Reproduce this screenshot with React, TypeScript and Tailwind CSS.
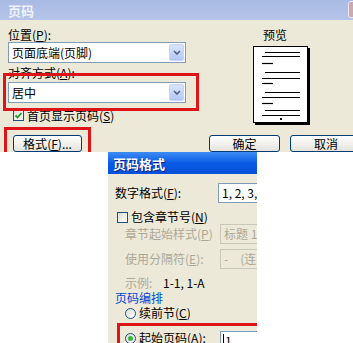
import React from 'react';

const font = { fontFamily: '"Noto Sans CJK SC", "Noto Sans", sans-serif' };

const Key = ({ k }: { k: string }) => (
  <span>
    (<span className="underline">{k}</span>)
  </span>
);

const DropArrow = () => (
  <div className="w-[15px] h-[17px] mr-[1px] rounded-[2px] bg-gradient-to-b from-[#d8e4fd] to-[#b4c8f4] border border-[#c3d3fd] flex items-center justify-center">
    <svg width="8" height="5" viewBox="0 0 8 5">
      <path d="M1 1 L4 4 L7 1" stroke="#4d6185" strokeWidth="1.6" fill="none" />
    </svg>
  </div>
);

const Select = ({ text }: { text: string }) => (
  <div className="h-[21px] bg-white border border-[#7f9db9] flex items-center justify-between">
    <span className="pl-[3px] text-[12px] leading-[14px] text-black">{text}</span>
    <DropArrow />
  </div>
);

const Checkbox = ({ checked }: { checked?: boolean }) => (
  <div className="w-[11px] h-[11px] border border-[#1c5180] bg-gradient-to-br from-[#dcdcd7] to-white flex items-center justify-center shrink-0">
    {checked && (
      <svg width="9" height="9" viewBox="0 0 9 9">
        <path d="M1.5 4.5 L3.5 6.5 L7.5 2" stroke="#21a121" strokeWidth="1.8" fill="none" />
      </svg>
    )}
  </div>
);

const Radio = ({ checked }: { checked?: boolean }) => (
  <div className="w-[11px] h-[11px] rounded-full border border-[#1c5180] bg-gradient-to-br from-[#dcdcd7] to-white flex items-center justify-center shrink-0">
    {checked && <div className="w-[5px] h-[5px] rounded-full bg-[#3cb33c]" />}
  </div>
);

const XpButton = ({ children, className }: { children: React.ReactNode; className: string }) => (
  <div
    className={`h-[17px] rounded-[3px] border border-[#003c74] bg-gradient-to-b from-white to-[#e4e3dc] flex items-center justify-center text-[12px] leading-[14px] text-black shrink-0 ${className}`}
  >
    {children}
  </div>
);

const lines = [
  [6, 12, 47], [10, 9, 47], [17, 9, 20],
  [26, 12, 47], [32, 9, 47], [37, 9, 20],
  [46, 12, 47], [51, 9, 47], [57, 9, 20],
  [64, 12, 47], [69, 9, 47],
];

const Preview = () => (
  <svg width="57" height="79" viewBox="0 0 57 79">
    <rect x="2" y="2" width="55" height="77" fill="#000" />
    <rect x="0.5" y="0.5" width="54" height="76" fill="#fff" stroke="#000" />
    {lines.map(([y, x1, x2], i) => (
      <line key={i} x1={x1} x2={x2} y1={y + 0.5} y2={y + 0.5} stroke="#000" strokeWidth="1.2" />
    ))}
    <rect x="27" y="72" width="2" height="2" fill="#000" />
  </svg>
);

export default function App() {
  return (
    <div className="w-[353px] h-[343px] overflow-hidden bg-white" style={font}>
      {/* 页码 dialog */}
      <div className="h-[152px] bg-[#ece9d8] flex flex-col relative overflow-hidden">
        <div className="h-[20px] shrink-0 bg-gradient-to-b from-[#a9bbe3] to-[#b4c4e8] flex items-center pl-[8px] relative">
          <span className="text-[13px] leading-[15px] font-bold text-[#eef2fb]">页码</span>
          <div className="absolute right-[-7px] top-[1px] w-[12px] h-[17px] rounded-[3px] bg-[#c9a9b3] border border-[#efe6ee]" />
        </div>

        <div className="flex">
          <div className="w-[178px] ml-[8px] flex flex-col">
            <div className="pt-[7px] h-[22px] text-[12px] leading-[15px] text-black">
              位置<Key k="P" />:
            </div>
            <Select text="页面底端(页脚)" />
            <div className="h-[19px] text-[12px] leading-[19px] text-black">
              对齐方式<Key k="A" />:
            </div>
            <Select text="居中" />
            <div className="mt-[5px] h-[15px] flex items-center gap-[3px] pl-[5px] text-[12px] leading-[14px] text-black">
              <Checkbox checked />
              <span>首页显示页码<Key k="S" /></span>
            </div>
          </div>

          <div className="ml-[67px] w-[58px] flex flex-col">
            <div className="pt-[8px] h-[22px] pl-[10px] text-[12px] leading-[14px] text-black">预览</div>
            <div className="mt-[4px]">
              <Preview />
            </div>
          </div>
        </div>

        <div className="mt-[10px] flex items-start">
          <XpButton className="ml-[13px] w-[69px]">
            格式<Key k="F" />...
          </XpButton>
          <XpButton className="ml-[127px] w-[71px]">确定</XpButton>
          <XpButton className="ml-[10px] w-[72px]">取消</XpButton>
        </div>

        {/* annotation boxes */}
        <div className="absolute left-[3px] top-[73px] w-[196px] h-[38px] border-[3px] border-[#dd1418]" />
        <div className="absolute left-[4px] top-[127px] w-[87px] h-[40px] border-[3px] border-[#dd1418]" />
      </div>

      {/* 页码格式 dialog */}
      <div className="flex h-[191px]">
        <div className="w-[108px] shrink-0 bg-white" />
        <div className="w-[149px] shrink-0 bg-[#ece9d8] flex flex-col relative overflow-hidden">
          <div className="h-[22px] shrink-0 bg-gradient-to-b from-[#3c8cf6] via-[#0a5be6] to-[#0450d8] flex items-center pl-[5px]">
            <span className="text-[13px] leading-[15px] font-bold text-white [text-shadow:1px_1px_0_#0a1e8a]">页码格式</span>
          </div>

          <div className="mt-[9px] h-[20px] flex items-center text-[12px] leading-[14px] text-black">
            <span className="pl-[7px] w-[110px] shrink-0">
              数字格式<Key k="F" />:
            </span>
            <div className="h-[20px] w-[80px] shrink-0 bg-white border border-[#7f9db9] flex items-center pl-[3px] whitespace-nowrap">
              1,&nbsp;2,&nbsp;3,&nbsp;…
            </div>
          </div>

          <div className="mt-[7px] h-[14px] flex items-center gap-[3px] pl-[9px] text-[12px] leading-[14px] text-black">
            <Checkbox />
            <span>包含章节号<Key k="N" /></span>
          </div>

          <div className="h-[20px] flex items-center text-[12px] leading-[14px] text-[#aca899] whitespace-nowrap">
            <span className="pl-[17px] w-[112px] shrink-0">
              章节起始样式<Key k="P" />
            </span>
            <div className="h-[20px] w-[80px] shrink-0 border border-[#c9c7ba] flex items-center pl-[3px]">标题 1</div>
          </div>

          <div className="mt-[5px] h-[20px] flex items-center text-[12px] leading-[14px] text-[#aca899] whitespace-nowrap">
            <span className="pl-[17px] w-[112px] shrink-0">
              使用分隔符<Key k="E" />:
            </span>
            <div className="h-[20px] w-[80px] shrink-0 border border-[#c9c7ba] flex items-center pl-[3px]">-　(连字符)</div>
          </div>

          <div className="mt-[7px] h-[14px] flex items-center pl-[17px] text-[12px] leading-[14px] whitespace-nowrap">
            <span className="text-[#aca899] w-[38px]">示例:</span>
            <span className="text-black">1-1, 1-A</span>
          </div>

          <div className="mt-[1px] h-[14px] pl-[7px] text-[12px] leading-[14px] text-[#0046d5]">页码编排</div>

          <div className="mt-[1px] h-[14px] flex items-center gap-[3px] pl-[17px] text-[12px] leading-[14px] text-black">
            <Radio />
            <span>续前节<Key k="C" /></span>
          </div>

          <div className="mt-[11px] h-[14px] flex items-center text-[12px] leading-[14px] text-black whitespace-nowrap">
            <div className="pl-[17px] w-[112px] shrink-0 flex items-center gap-[3px]">
              <Radio checked />
              <span>起始页码<Key k="A" />:</span>
            </div>
            <div className="h-[20px] mt-[6px] w-[80px] shrink-0 bg-white border border-[#7f9db9] flex items-center pl-[2px]">
              <span className="border-l border-black pl-[1px]">1</span>
            </div>
          </div>

          <div className="absolute left-[9px] top-[171px] w-[160px] h-[40px] border-[3px] border-[#dd1418]" />
        </div>
        <div className="flex-1 bg-white" />
      </div>
    </div>
  );
}
